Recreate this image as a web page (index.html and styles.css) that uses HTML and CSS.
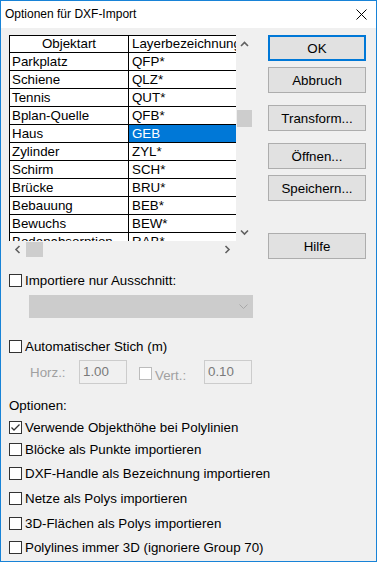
FILE: index.html
```html
<!DOCTYPE html>
<html lang="de">
<head>
    <meta charset="UTF-8">
    <title>Optionen für DXF-Import</title>
    <link rel="stylesheet" href="styles.css">
</head>
<body>
<div class="window">
    <div class="titlebar">
        <span class="title">Optionen für DXF-Import</span>
        <svg class="close" width="11" height="11" viewBox="0 0 11 11">
            <path d="M0.5 0.5 L10.5 10.5 M10.5 0.5 L0.5 10.5" stroke="#000" stroke-width="1" fill="none"/>
        </svg>
    </div>

    <div class="client">
        <div class="top">
            <div class="gridbox">
                <div class="grid-area">
                    <div class="grid">
                        <div class="row head"><div class="cell c1">Objektart</div><div class="cell c2">Layerbezeichnung</div></div>
                        <div class="row"><div class="cell c1">Parkplatz</div><div class="cell c2">QFP*</div></div>
                        <div class="row"><div class="cell c1">Schiene</div><div class="cell c2">QLZ*</div></div>
                        <div class="row"><div class="cell c1">Tennis</div><div class="cell c2">QUT*</div></div>
                        <div class="row"><div class="cell c1">Bplan-Quelle</div><div class="cell c2">QFB*</div></div>
                        <div class="row"><div class="cell c1">Haus</div><div class="cell c2 selected">GEB</div></div>
                        <div class="row"><div class="cell c1">Zylinder</div><div class="cell c2">ZYL*</div></div>
                        <div class="row"><div class="cell c1">Schirm</div><div class="cell c2">SCH*</div></div>
                        <div class="row"><div class="cell c1">Brücke</div><div class="cell c2">BRU*</div></div>
                        <div class="row"><div class="cell c1">Bebauung</div><div class="cell c2">BEB*</div></div>
                        <div class="row"><div class="cell c1">Bewuchs</div><div class="cell c2">BEW*</div></div>
                        <div class="row"><div class="cell c1">Bodenabsorption</div><div class="cell c2">RAB*</div></div>
                    </div>
                    <div class="vscroll">
                        <svg class="arrow" width="17" height="17" viewBox="0 0 17 17">
                            <polyline points="5,11 8.5,7.5 12,11" stroke="#606060" stroke-width="1.6" fill="none"/>
                        </svg>
                        <div class="vthumb"></div>
                        <svg class="arrow down" width="17" height="17" viewBox="0 0 17 17">
                            <polyline points="5,6.5 8.5,10 12,6.5" stroke="#606060" stroke-width="1.6" fill="none"/>
                        </svg>
                    </div>
                </div>
                <div class="hscroll">
                    <svg class="arrow" width="17" height="17" viewBox="0 0 17 17">
                        <polyline points="10.5,5 7,8.5 10.5,12" stroke="#606060" stroke-width="1.6" fill="none"/>
                    </svg>
                    <div class="hthumb"></div>
                    <svg class="arrow right" width="17" height="17" viewBox="0 0 17 17">
                        <polyline points="6.5,5 10,8.5 6.5,12" stroke="#606060" stroke-width="1.6" fill="none"/>
                    </svg>
                    <div class="corner"></div>
                </div>
            </div>

            <div class="buttons">
                <div class="btn default">OK</div>
                <div class="btn gap-s">Abbruch</div>
                <div class="btn gap-m">Transform...</div>
                <div class="btn gap-m">Öffnen...</div>
                <div class="btn gap-s">Speichern...</div>
                <div class="btn gap-l">Hilfe</div>
            </div>
        </div>

        <div class="check-row first">
            <span class="box"></span>
            <span class="label">Importiere nur Ausschnitt:</span>
        </div>
        <div class="combo">
            <svg width="9" height="5" viewBox="0 0 9 5">
                <polyline points="0.5,0.5 4.5,4.5 8.5,0.5" stroke="#a8a8a8" stroke-width="1" fill="none"/>
            </svg>
        </div>

        <div class="check-row stich">
            <span class="box"></span>
            <span class="label">Automatischer Stich (m)</span>
        </div>
        <div class="field-row">
            <span class="field-label">Horz.:</span>
            <span class="field">1.00</span>
            <span class="vert">
                <span class="box disabled"></span>
                <span class="field-label short">Vert.:</span>
            </span>
            <span class="field">0.10</span>
        </div>

        <div class="section">Optionen:</div>
        <div class="check-row opt near">
            <span class="box">
                <svg width="11" height="11" viewBox="0 0 11 11">
                    <polyline points="1.5,5.5 4,8 9.5,2.5" stroke="#333" stroke-width="1.3" fill="none"/>
                </svg>
            </span>
            <span class="label">Verwende Objekthöhe bei Polylinien</span>
        </div>
        <div class="check-row opt near">
            <span class="box"></span>
            <span class="label">Blöcke als Punkte importieren</span>
        </div>
        <div class="check-row opt">
            <span class="box"></span>
            <span class="label">DXF-Handle als Bezeichnung importieren</span>
        </div>
        <div class="check-row opt far">
            <span class="box"></span>
            <span class="label">Netze als Polys importieren</span>
        </div>
        <div class="check-row opt far">
            <span class="box"></span>
            <span class="label">3D-Flächen als Polys importieren</span>
        </div>
        <div class="check-row opt">
            <span class="box"></span>
            <span class="label">Polylines immer 3D (ignoriere Group 70)</span>
        </div>
    </div>
</div>
</body>
</html>
```

FILE: styles.css
```css
body {
    margin: 0;
    background: #fff;
    font-family: "Liberation Sans", Arial, sans-serif;
    font-size: 13.33px;
    color: #000;
}

.window {
    width: 377px;
    height: 562px;
    box-sizing: border-box;
    border: 1px solid #1883d7;
    background: #f0f0f0;
    display: flex;
    flex-direction: column;
}

.titlebar {
    height: 27px;
    flex: none;
    background: #fff;
    display: flex;
    align-items: center;
    justify-content: space-between;
    padding: 0 9px 1px 4px;
    box-sizing: border-box;
}

.title {
    font-size: 12px;
}

.client {
    padding: 7px 0 0 8px;
    display: flex;
    flex-direction: column;
}

.top {
    display: flex;
}

/* grid with scrollbars */
.gridbox {
    width: 244px;
    display: flex;
    flex-direction: column;
}

.grid-area {
    display: flex;
    height: 206px;
}

.grid {
    width: 227px;
    height: 206px;
    box-sizing: border-box;
    border-left: 1px solid #000;
    border-top: 1px solid #000;
    background: #fff;
    overflow: hidden;
}

.row {
    display: flex;
    height: 18px;
}

.row.head {
    height: 17px;
}

.cell {
    flex: none;
    box-sizing: border-box;
    border-right: 1px solid #000;
    border-bottom: 1px solid #000;
    line-height: 17px;
    white-space: nowrap;
    overflow: hidden;
}

.head .cell {
    line-height: 16px;
}

.c1 {
    width: 119px;
    padding-left: 2px;
}

.head .c1 {
    text-align: center;
    padding-left: 0;
}

.c2 {
    width: 130px;
    padding-left: 3px;
}

.selected {
    background: #0078d7;
    color: #fff;
}

.vscroll {
    width: 17px;
    display: flex;
    flex-direction: column;
    align-items: center;
}

.arrow {
    display: block;
    flex: none;
}

.vthumb {
    width: 15px;
    height: 17px;
    background: #cdcdcd;
    margin-top: 58px;
}

.arrow.down {
    margin-top: auto;
}

.hscroll {
    height: 17px;
    display: flex;
    align-items: center;
}

.hthumb {
    width: 17px;
    height: 15px;
    background: #cdcdcd;
}

.arrow.right {
    margin-left: auto;
}

.corner {
    width: 17px;
    height: 17px;
}

/* buttons */
.buttons {
    width: 98px;
    margin-left: 15px;
    display: flex;
    flex-direction: column;
}

.btn {
    height: 26px;
    box-sizing: border-box;
    border: 1px solid #adadad;
    background: #e1e1e1;
    display: flex;
    align-items: center;
    justify-content: center;
}

.btn.default {
    border: 2px solid #0078d7;
}

.gap-s {
    margin-top: 6px;
}

.gap-m {
    margin-top: 12px;
}

.gap-l {
    margin-top: 32px;
}

/* checkboxes */
.check-row {
    display: flex;
    align-items: center;
    height: 15px;
}

.box {
    width: 13px;
    height: 13px;
    box-sizing: border-box;
    border: 1px solid #333;
    background: #fff;
    flex: none;
    display: flex;
    align-items: center;
    justify-content: center;
}

.box svg {
    display: block;
}

.box.disabled {
    border-color: #bcbcbc;
}

.label {
    margin-left: 3px;
    white-space: nowrap;
}

.check-row.first {
    margin-top: 14px;
}

.combo {
    width: 224px;
    height: 23px;
    margin: 7px 0 0 20px;
    background: #cccccc;
    display: flex;
    align-items: center;
    justify-content: flex-end;
    padding-right: 5px;
    box-sizing: border-box;
}

.check-row.stich {
    margin-top: 21px;
}

.field-row {
    display: flex;
    align-items: center;
    height: 24px;
    margin: 6px 0 0 21px;
}

.field-label {
    width: 49px;
    color: #a0a0a0;
}

.field-label.short {
    width: 49px;
    margin-left: 3px;
    padding-top: 3px;
}

.field {
    width: 48px;
    height: 24px;
    box-sizing: border-box;
    border: 1px solid #cccccc;
    padding: 3px 0 0 3px;
    color: #7a7a7a;
}

.vert {
    display: flex;
    align-items: center;
    margin-left: 12px;
    padding-top: 3px;
}

.section {
    margin-top: 14px;
    height: 15px;
    line-height: 15px;
}

.check-row.opt {
    margin-top: 9px;
}

.check-row.opt.near {
    margin-top: 7px;
}

.check-row.opt.far {
    margin-top: 10px;
}
```
